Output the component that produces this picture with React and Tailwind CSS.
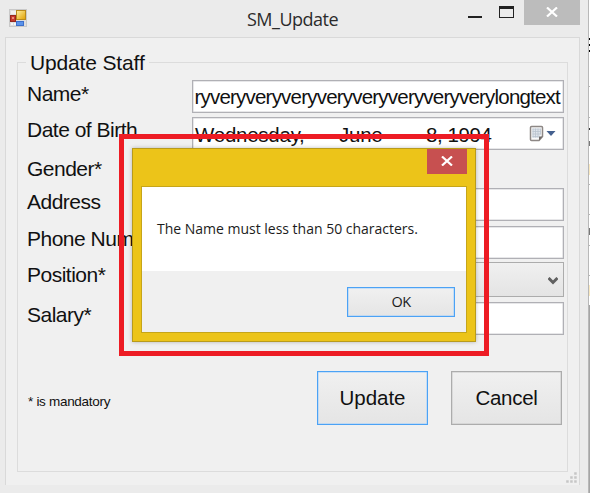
import React from "react";

function AppIcon() {
  return (
    <svg width="18" height="18" viewBox="0 0 18 18">
      <defs>
        <linearGradient id="gold" x1="0" y1="0" x2="1" y2="1">
          <stop offset="0" stopColor="#fff0a0" />
          <stop offset="1" stopColor="#e0a000" />
        </linearGradient>
      </defs>
      <rect x="0.5" y="0.5" width="17" height="17" fill="#dedede" stroke="#c9c9c9" />
      <rect x="2" y="2" width="5" height="3" fill="#f1f1f1" />
      <rect x="2" y="14" width="2" height="2" fill="#f6f6f6" />
      <rect x="5" y="14" width="2" height="2" fill="#f6f6f6" />
      <rect x="7.5" y="1.5" width="9" height="9" fill="url(#gold)" stroke="#b98a1c" />
      <rect x="1.5" y="6.5" width="5" height="6" fill="#c8392c" stroke="#96281f" />
      <rect x="3" y="8" width="2" height="2" fill="#ec8a78" />
      <rect x="7.5" y="12.5" width="7" height="4" fill="#5b93ea" stroke="#3d6fcb" />
    </svg>
  );
}

function CloseGlyph() {
  return (
    <svg width="12" height="10" viewBox="0 0 12 10" fill="none" stroke="#fff" strokeWidth="2.2">
      <path d="M1 0.5L11 9.5M11 0.5L1 9.5" />
    </svg>
  );
}

function TitleBar() {
  return (
    <header className="flex h-[37px] shrink-0 items-start">
      <div className="w-[247px] pt-[9px] pl-[9px]">
        <AppIcon />
      </div>
      <h1 className="h-[37px] w-[221px] text-[18px] leading-[39px] tracking-[-0.5px] whitespace-nowrap text-[#2b2b2b] [font-family:'Open_Sans','Noto_Sans',sans-serif]">
        SM_Update
      </h1>
      <div className="mt-4 h-[2px] w-[14px] bg-[#222]" />
      <div className="mt-[6px] ml-[17px] h-3 w-[15px] border border-t-[3px] border-[#222]" />
      <div className="ml-[10px] flex h-[25px] w-14 items-center justify-center bg-[#bcbcbc] pr-px pb-px">
        <CloseGlyph />
      </div>
    </header>
  );
}

function CalendarButton() {
  return (
    <svg className="mt-[7px] ml-auto shrink-0" width="27" height="18" viewBox="0 0 27 18">
      <path d="M2.500 1.5h10q1 0 1 1v9l-3.500 4h-7.500q-1 0-1-1v-12q0-1 1-1z" fill="#fafafa" stroke="#8d8785" strokeWidth="1.5" />
      <path d="M3.500 4h8v6l-2 3h-6z" fill="#dfe5ec" />
      <path d="M3.5 4h8M3.5 6.5h8M3.5 9h8M3.5 11.5h6M4 3.5v9M6.5 3.5v9M9 3.5v9M11.5 3.5v6" stroke="#b9c3ce" strokeWidth="0.8" />
      <path d="M13.5 11.500h-3.500v4z" fill="#6f6a68" />
      <path d="M17.500 6h9l-4.500 5z" fill="#44608f" />
    </svg>
  );
}

const labels = [
  ["Name*", "h-[36px]"],
  ["Date of Birth", "h-[39px]"],
  ["Gender*", "h-[33px]"],
  ["Address", "h-[37px]"],
  ["Phone Number*", "h-[36px]"],
  ["Position*", "h-[40px]"],
  ["Salary*", "h-[24px]"],
];

const field = "border border-[#b0b0b5] bg-white shadow-[inset_0_0_0_0.5px_#d0d0d4]";

function Form() {
  return (
    <fieldset className="mr-[11px] ml-[11px] mt-[12px] h-[422px] min-w-0 border border-[#dcdcdc] pl-[9px] text-[20px] leading-6 text-[#111]">
      <legend className="ml-[-1px] h-6 w-[123px] px-[4px] text-[21px] leading-[26px] tracking-[-0.15px] whitespace-nowrap">
        Update Staff
      </legend>
      <div className="mt-[6px] flex">
        <div className="w-[165px] shrink-0 pt-[2px] text-[21px] leading-6 tracking-[-0.5px] whitespace-nowrap">
          {labels.map(([text, height]) => (
            <div key={text} className={height}>
              {text}
            </div>
          ))}
        </div>
        <div className="w-[372px] shrink-0">
          <div className={`${field} flex h-[33px] items-center justify-end overflow-hidden pt-px pr-[3px]`}>
            <span className="text-[20.5px] tracking-[-0.79px] whitespace-nowrap">
              ryveryveryveryveryveryveryveryverylongtext
            </span>
          </div>
          <div className={`${field} mt-1 flex h-[33px] pl-[2px] pr-[7px] text-[20.5px] leading-[33px] tracking-[-0.25px] whitespace-nowrap`}>
            <span className="w-[144px] shrink-0">Wednesday,</span>
            <span className="w-[87px] shrink-0">June</span>
            <span className="tracking-[-0.4px]">8, 1994</span>
            <CalendarButton />
          </div>
          <div className={`${field} mt-[38px] h-[33px]`} />
          <div className={`${field} mt-[5px] h-[33px]`} />
          <div className="mt-[3px] flex h-[35px] items-center justify-end border border-[#acacac] bg-linear-to-b from-[#f0f0f0] to-[#e4e4e4] pt-[2px] pr-[5px]">
            <svg width="10" height="8" viewBox="0 0 10 8" fill="none" stroke="#606060" strokeWidth="3">
              <path d="M0.500 1L5 5.500L9.500 1" />
            </svg>
          </div>
          <div className={`${field} mt-[5px] h-[33px]`} />
        </div>
      </div>
      <div className="mt-[36px] flex">
        <div className="w-[290px] shrink-0 pt-[19px] pl-px text-[13.5px] tracking-[-0.3px]">* is mandatory</div>
        <button className="h-[54px] w-[111px] shrink-0 border border-[#4ba2f5] bg-linear-to-b from-[#f0f0f0] to-[#e5e5e5] text-[20.5px] tracking-[-0.05px] shadow-[inset_0_0_0_0.5px_#9fcdfb]">
          Update
        </button>
        <button className="ml-[23px] h-[54px] w-[111px] shrink-0 border border-[#acacac] bg-linear-to-b from-[#f0f0f0] to-[#e5e5e5] text-[20.5px] tracking-[-0.3px] shadow-[inset_0_0_0_0.5px_#c8c8c8]">
          Cancel
        </button>
      </div>
    </fieldset>
  );
}

function MessageBox() {
  return (
    <div className="absolute top-[134px] left-[119px] h-[222px] w-[370px] border-5 border-[#ed1c24] pt-[9px] pl-[8px]">
      <div className="h-[194px] w-[344px] border border-[#b89b1b] bg-[#ecc419] pr-[8px] pl-[8px] shadow-[0_0_4px_rgba(0,0,0,0.25)]">
        <div className="flex h-[37px] justify-end">
          <div className="flex h-[25px] w-10 items-center justify-center bg-[#c75050] pb-px">
            <CloseGlyph />
          </div>
        </div>
        <div className="flex h-[147px] w-[326px] flex-col border border-[#c6a51a] bg-[#f0f0f0] [font-family:'Open_Sans','Noto_Sans',sans-serif]">
          <p className="h-[84px] bg-white pt-[32px] pl-[15px] text-[14px] leading-5 tracking-[-0.01px] whitespace-nowrap text-[#1c1c1c]">
            The Name must less than 50 characters.
          </p>
          <button className="mt-[16px] ml-[205px] h-[30px] w-[108px] shrink-0 border border-[#4ba2f5] bg-linear-to-b from-[#f0f0f0] to-[#e5e5e5] pb-px text-[14.5px] tracking-[-0.5px] text-[#1c1c1c] shadow-[inset_0_0_0_0.5px_#9fcdfb]">
            OK
          </button>
        </div>
      </div>
    </div>
  );
}

function BackgroundWindow() {
  return (
    <div className="flex h-full w-[2px] flex-col border-l border-[#b8b8b8] bg-white">
      <div className="mt-[38px] h-[2px] bg-black" />
      <div className="mt-1 h-[2px] bg-black" />
      <div className="mt-1 h-[2px] bg-black" />
      <div className="mt-[34px] h-px bg-[#b5b5b5]" />
      <div className="mt-[30px] h-px bg-[#b5b5b5]" />
      <div className="mt-[10px] h-[2px] bg-[#333]" />
      <div className="mt-[11px] h-[5px] bg-[#777]" />
      <div className="mt-[18px] h-[11px] bg-[#fae9c0]" />
      <div className="mt-[9px] h-px bg-[#b5b5b5]" />
      <div className="mt-[29px] h-px bg-[#b5b5b5]" />
      <div className="mt-[13px] h-[7px] bg-[#777]" />
      <div className="mt-[10px] h-px bg-[#b5b5b5]" />
      <div className="mt-[29px] h-px bg-[#b5b5b5]" />
      <div className="mt-[9px] h-[11px] bg-[#fae9c0]" />
      <div className="mt-[9px] flex-1 bg-[#a5a5a5]" />
    </div>
  );
}

export default function App() {
  return (
    <div className="relative flex h-[493px] w-[590px] overflow-hidden bg-[#ebebeb] [font-family:'Liberation_Sans',Arial,sans-serif]">
      <main className="flex w-[588px] flex-col">
        <TitleBar />
        <section className="relative ml-[5px] h-[448px] w-[575px] border-x border-t border-[#d9d9d9] bg-[#f0f0f0]">
          <Form />
          <svg className="absolute right-[2px] bottom-[2px]" width="11" height="11" fill="#c6c6c6">
            <path d="M8.200 0.200h2.500v2.500h-2.500zM4.200 4.200h2.500v2.500h-2.500zM8.200 4.200h2.500v2.500h-2.500zM0.200 8.200h2.500v2.500h-2.500zM4.200 8.200h2.500v2.500h-2.500zM8.200 8.200h2.500v2.500h-2.500z" />
          </svg>
        </section>
      </main>
      <BackgroundWindow />
      <MessageBox />
    </div>
  );
}
